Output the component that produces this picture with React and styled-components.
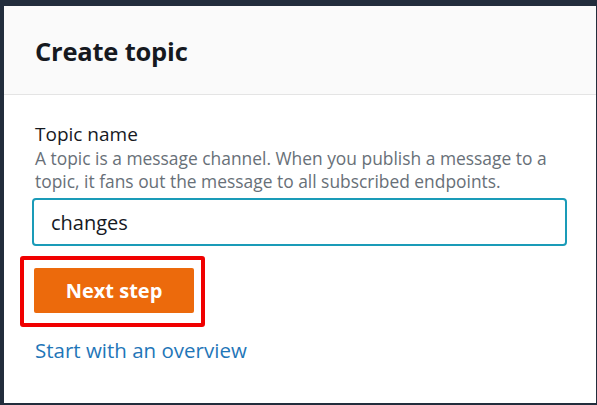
import React from "react";
import styled, { createGlobalStyle } from "styled-components";

const GlobalStyle = createGlobalStyle`
  html, body {
    margin: 0;
    padding: 0;
    background: #222d3c;
  }
  body {
    font-family: "Open Sans", "Liberation Sans", sans-serif;
    -webkit-font-smoothing: antialiased;
  }
`;

const Frame = styled.div`
  width: 597px;
  height: 405px;
  box-sizing: border-box;
  padding: 6px 1px 2px 4px;
  background: #222d3c;
`;

const Card = styled.section`
  height: 100%;
  background: #ffffff;
  display: flex;
  flex-direction: column;
`;

const Header = styled.header`
  height: 89px;
  box-sizing: border-box;
  padding: 0 31px;
  display: flex;
  align-items: center;
  background: #fafafa;
  border-bottom: 1px solid #e4e4e4;
  h2 {
    margin: 0;
    padding-top: 2px;
    font-size: 25.5px;
    font-weight: 700;
    color: #16191f;
    letter-spacing: -0.2px;
  }
`;

const Body = styled.div`
  padding: 26px 29px 0 28px;
  display: flex;
  flex-direction: column;
`;

const Label = styled.label`
  font-size: 19px;
  line-height: 26px;
  color: #16191f;
  padding-left: 3px;
`;

const Description = styled.p`
  width: 525px;
  margin: 0 0 5px;
  padding-left: 3px;
  font-size: 17.4px;
  line-height: 23px;
  color: #687078;
`;

const Input = styled.input`
  box-sizing: border-box;
  width: 535px;
  height: 48px;
  padding: 0 17px;
  border: 2px solid #1a9bb8;
  border-radius: 4px;
  font-family: inherit;
  font-size: 20px;
  color: #16191f;
  outline: none;
`;

const Highlight = styled.div`
  align-self: flex-start;
  margin: 10px 0 0 -12px;
  padding: 8px 7px 10px 10px;
  border: 4px solid #f00000;
  border-radius: 3px;
`;

const Button = styled.button`
  width: 160px;
  height: 45px;
  border: none;
  border-radius: 2px;
  background: #ec6a0c;
  color: #ffffff;
  font-family: inherit;
  font-size: 20px;
  font-weight: 700;
  cursor: pointer;
`;

const Link = styled.a`
  margin: 9px 0 0 3px;
  font-size: 20.5px;
  color: #1f76b8;
  text-decoration: none;
`;

export default function App() {
  return (
    <>
      <GlobalStyle />
      <Frame>
        <Card>
          <Header>
            <h2>Create topic</h2>
          </Header>
          <Body>
            <Label htmlFor="topic">Topic name</Label>
            <Description>
              A topic is a message channel. When you publish a message to a
              topic, it fans out the message to all subscribed endpoints.
            </Description>
            <Input id="topic" defaultValue="changes" />
            <Highlight>
              <Button>Next step</Button>
            </Highlight>
            <Link href="#">Start with an overview</Link>
          </Body>
        </Card>
      </Frame>
    </>
  );
}
